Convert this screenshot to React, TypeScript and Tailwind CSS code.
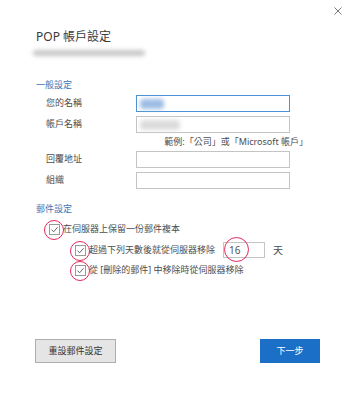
import React from 'react';

const Check = () => (
  <svg width="9" height="9" viewBox="0 0 9 9" fill="none">
    <path d="M1.5 4.6 L3.6 6.8 L7.6 2.2" stroke="#666" strokeWidth="1" />
  </svg>
);

const Ring = ({ className }: { className: string }) => (
  <span className={`absolute rounded-full border-[1.5px] border-[#e2285c] ${className}`} />
);

const CheckRow = ({ indent, children }: { indent: string; children: React.ReactNode }) => (
  <div className={`flex items-center h-[20px] ${indent}`}>
    <span className="relative w-[11px] h-[11px] border border-[#9a9a9a] bg-white flex items-center justify-center shrink-0">
      <Check />
      <Ring className="-left-[6px] -top-[5px] w-[20px] h-[20px]" />
    </span>
    <span className="ml-[3px]">{children}</span>
  </div>
);

const Field = ({ label, children, focused }: { label: string; children?: React.ReactNode; focused?: boolean }) => (
  <div className="flex items-start pl-[10px]">
    <span className="w-[90px] leading-[14px] pt-[1px]">{label}</span>
    <div
      className={`w-[154px] h-[17px] bg-white flex items-center pl-[3px] border ${
        focused ? 'border-[#4a93d6]' : 'border-[#c4c4c4]'
      }`}
    >
      {children}
    </div>
  </div>
);

export default function App() {
  return (
    <div className="w-[355px] h-[398px] bg-white text-[9px] text-[#4d4d4d] font-['Noto_Sans','Noto_Sans_CJK_TC',sans-serif] flex flex-col">
      {/* close */}
      <div className="h-[20px] flex justify-end pt-[7px] pr-[13px]">
        <svg width="8" height="8" viewBox="0 0 8 8">
          <path d="M0.5 0.5 L7.5 7.5 M7.5 0.5 L0.5 7.5" stroke="#777" strokeWidth="1" />
        </svg>
      </div>

      <div className="pl-[36px] flex flex-col">
        <h1 className="mt-[9px] text-[12px] leading-[16px] text-[#3a3a3a]">POP 帳戶設定</h1>
        <div className="mt-[5px] -ml-[3px] w-[112px] h-[6px] rounded-full bg-[#c8c8c8] blur-[2px]" />

        <h2 className="mt-[23px] leading-[12px] text-[#3b74b4]">一般設定</h2>
        <div className="mt-[4px] flex flex-col gap-[4px]">
          <Field label="您的名稱" focused>
            <div className="w-[24px] h-[10px] bg-[#9dbde4] blur-[2px] rounded" />
          </Field>
          <Field label="帳戶名稱">
            <div className="w-[40px] h-[10px] bg-[#dcdcdc] blur-[2px] rounded" />
          </Field>
          <div className="w-[272px] h-[10px] flex justify-end items-center leading-[10px]">
            範例:「公司」或「Microsoft 帳戶」
          </div>
          <Field label="回覆地址" />
          <Field label="組織" />
        </div>

        <h2 className="mt-[14px] leading-[12px] text-[#3b74b4]">郵件設定</h2>
        <div className="mt-[4px] flex flex-col">
          <CheckRow indent="pl-[13px]">在伺服器上保留一份郵件複本</CheckRow>
          <div className="mt-[1px] flex items-center">
            <CheckRow indent="pl-[39px]">超過下列天數後就從伺服器移除</CheckRow>
            <div className="relative ml-[8px] w-[42px] h-[16px] border border-[#c4c4c4] flex items-center pl-[5px] text-[10px] text-[#555]">
              16
              <Ring className="left-0 -top-[6px] w-[25px] h-[25px]" />
            </div>
            <span className="ml-[8px] text-[10px]">天</span>
          </div>
          <CheckRow indent="pl-[39px]">從 [刪除的郵件] 中移除時從伺服器移除</CheckRow>
        </div>

        <div className="mt-[59px] -ml-[1px] w-[285px] flex justify-between">
          <button className="w-[81px] h-[24px] bg-[#e5e5e5] border border-[#adadad] text-[#333]">重設郵件設定</button>
          <button className="w-[60px] h-[24px] bg-[#1c6fc6] text-white">下一步</button>
        </div>
      </div>
    </div>
  );
}
